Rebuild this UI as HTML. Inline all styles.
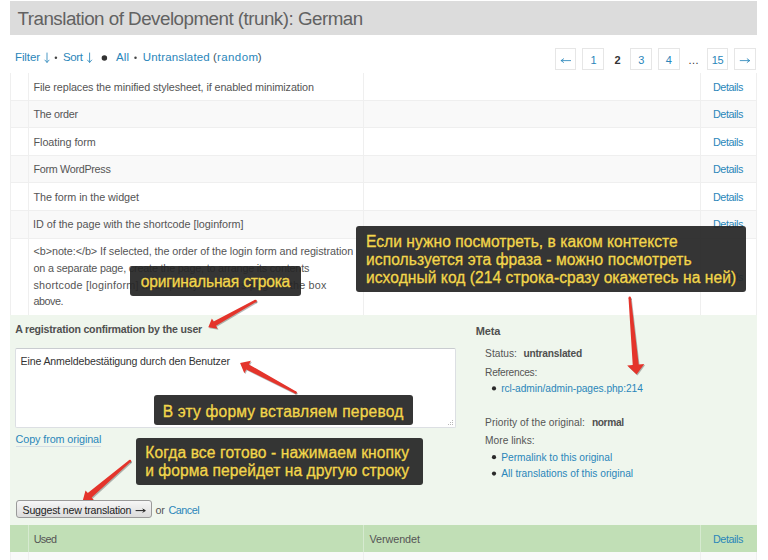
<!DOCTYPE html>
<html><head><meta charset="utf-8">
<style>
html,body{margin:0;padding:0;width:768px;height:560px;overflow:hidden;background:#fff;font-family:"Liberation Sans",sans-serif;}
.a{position:absolute}
.t{position:absolute;line-height:1;white-space:pre;font-family:"Liberation Sans",sans-serif}
.pg{position:absolute;top:48px;height:22px;width:22px;box-sizing:border-box;border:1px solid #e6e6e6;background:#fff}
.hl{position:absolute;height:1px;background:#efefef}
.vl{position:absolute;width:1px;background:#efefef}
.tip{position:absolute;background:rgba(38,38,38,0.93);border-radius:3px}
</style></head><body>
<!-- header -->
<div class=a style="left:10px;top:1px;width:747px;height:34px;background:#dcdcdc"></div>

<!-- pagination -->
<div class=pg style="left:555px;width:21px"></div>
<div class=pg style="left:582px"></div>
<div class=pg style="left:630px"></div>
<div class=pg style="left:658px"></div>
<div class=pg style="left:707px;width:21px"></div>
<div class=pg style="left:734px"></div>

<!-- table -->
<div class=a style="left:10px;top:100px;width:746.5px;height:27.5px;background:#f9f9f9"></div>
<div class=a style="left:10px;top:155px;width:746.5px;height:27.5px;background:#f9f9f9"></div>
<div class=a style="left:10px;top:210px;width:746.5px;height:28px;background:#f9f9f9"></div>
<div class=hl style="left:10px;top:99.5px;width:746.5px"></div>
<div class=hl style="left:10px;top:127px;width:746.5px"></div>
<div class=hl style="left:10px;top:154.5px;width:746.5px"></div>
<div class=hl style="left:10px;top:182px;width:746.5px"></div>
<div class=hl style="left:10px;top:209.5px;width:746.5px"></div>
<div class=hl style="left:10px;top:237.5px;width:746.5px"></div>
<div class=vl style="left:9.5px;top:72.5px;height:242.5px"></div>
<div class=vl style="left:28px;top:72.5px;height:242.5px"></div>
<div class=vl style="left:363px;top:72.5px;height:242.5px"></div>
<div class=vl style="left:700px;top:72.5px;height:242.5px"></div>
<div class=vl style="left:756px;top:72.5px;height:242.5px"></div>

<!-- editor -->
<div class=a style="left:10px;top:315px;width:746.5px;height:210px;background:#eff6ed"></div>
<div class=a style="left:15.2px;top:348px;width:441.3px;height:80.3px;box-sizing:border-box;background:#fff;border:1px solid #dcdfe3;border-top-color:#c9ccd0;border-radius:2px"></div>
<svg class=a style="left:446px;top:418px" width="10" height="10" viewBox="446 418 10 10" fill="#b8b8b8"><rect x="452" y="420" width="1" height="1"/><rect x="450" y="422" width="1" height="1"/><rect x="452" y="422" width="1" height="1"/><rect x="448" y="424" width="1" height="1"/><rect x="450" y="424" width="1" height="1"/><rect x="452" y="424" width="1" height="1"/></svg>
<div class=a style="left:15.6px;top:445.8px;width:85.4px;height:1px;background:#d4dde4"></div>
<svg class=a style="left:0;top:0" width="768" height="560" viewBox="0 0 768 560"><defs><filter id="sh" x="-20%" y="-20%" width="140%" height="140%"><feGaussianBlur stdDeviation="0.7"/></filter></defs><g transform="translate(0.9,1.1)" filter="url(#sh)" fill="rgba(0,0,0,0.28)"><polygon points="208.30,327.20 217.63,328.76 215.96,325.75 256.18,301.95 255.02,299.85 213.58,321.46 211.90,318.45"/><circle cx="255.6" cy="300.9" r="1.2"/></g><g transform="translate(0.9,1.1)" filter="url(#sh)" fill="rgba(0,0,0,0.28)"><polygon points="636.60,374.50 644.29,363.97 638.71,364.47 630.90,297.69 628.50,297.91 632.73,365.01 627.16,365.51"/><circle cx="629.7" cy="297.8" r="1.2"/></g><g transform="translate(0.9,1.1)" filter="url(#sh)" fill="rgba(0,0,0,0.28)"><polygon points="240.10,363.00 244.32,373.17 246.27,369.51 295.04,393.56 296.16,391.44 248.94,364.47 250.89,360.81"/><circle cx="295.6" cy="392.5" r="1.2"/></g><g transform="translate(0.9,1.1)" filter="url(#sh)" fill="rgba(0,0,0,0.28)"><polygon points="82.50,501.50 93.94,500.27 91.67,497.61 130.78,461.81 129.22,459.99 87.77,493.05 85.50,490.39"/><circle cx="130.0" cy="460.9" r="1.2"/></g><g fill="#e4342b"><polygon points="208.30,327.20 217.63,328.76 215.96,325.75 256.18,301.95 255.02,299.85 213.58,321.46 211.90,318.45"/><circle cx="255.6" cy="300.9" r="1.2"/></g><g fill="#e4342b"><polygon points="636.60,374.50 644.29,363.97 638.71,364.47 630.90,297.69 628.50,297.91 632.73,365.01 627.16,365.51"/><circle cx="629.7" cy="297.8" r="1.2"/></g><g fill="#e4342b"><polygon points="240.10,363.00 244.32,373.17 246.27,369.51 295.04,393.56 296.16,391.44 248.94,364.47 250.89,360.81"/><circle cx="295.6" cy="392.5" r="1.2"/></g><g fill="#e4342b"><polygon points="82.50,501.50 93.94,500.27 91.67,497.61 130.78,461.81 129.22,459.99 87.77,493.05 85.50,490.39"/><circle cx="130.0" cy="460.9" r="1.2"/></g></svg>
<div class=a style="left:15.7px;top:500.2px;width:136.2px;height:18.2px;box-sizing:border-box;border:1px solid #9a9a9a;border-radius:3px;background:linear-gradient(#f6f6f6,#dcdcdc)"></div>

<!-- used row -->
<div class=a style="left:10px;top:525px;width:746.5px;height:26.8px;background:#c1dfb6"></div>
<div class=a style="left:10px;top:551.8px;width:746.5px;height:9px;background:#f9f9f9"></div>
<div class=vl style="left:28px;top:525px;height:27px;background:#d6ead0"></div>
<div class=vl style="left:363px;top:525px;height:27px;background:#d6ead0"></div>
<div class=vl style="left:700px;top:525px;height:27px;background:#d6ead0"></div>
<div class=vl style="left:9.5px;top:552px;height:10px"></div>
<div class=vl style="left:28px;top:552px;height:10px"></div>
<div class=vl style="left:363px;top:552px;height:10px"></div>
<div class=vl style="left:700px;top:552px;height:10px"></div>
<div class=vl style="left:756px;top:552px;height:10px"></div>

<div class=t style="left:17.50px;top:10.00px;font-size:18.8px;color:#626262;letter-spacing:-0.514px;">Translation of Development (trunk): German</div>
<div class=t style="left:15.00px;top:52.00px;font-size:11.5px;color:#2a86ba;letter-spacing:-0.105px;">Filter</div>
<div class=t style="left:63.10px;top:52.00px;font-size:11.5px;color:#2a86ba;letter-spacing:-0.399px;">Sort</div>
<div class=t style="left:116.00px;top:52.00px;font-size:11.5px;color:#2a86ba;letter-spacing:0.187px;">All</div>
<div class=t style="left:142.80px;top:52.00px;font-size:11.5px;color:#2a86ba;letter-spacing:0.154px;">Untranslated</div>
<div class=t style="left:213.00px;top:52.00px;font-size:11.5px;color:#4a5560;letter-spacing:0.000px;">(</div>
<div class=t style="left:217.00px;top:52.00px;font-size:11.5px;color:#2a86ba;letter-spacing:0.417px;">random</div>
<div class=t style="left:257.80px;top:52.00px;font-size:11.5px;color:#4a5560;letter-spacing:0.000px;">)</div>
<div class=t style="left:33.50px;top:82.00px;font-size:10.8px;color:#555555;letter-spacing:-0.106px;">File replaces the minified stylesheet, if enabled minimization</div>
<div class=t style="left:713.00px;top:82.00px;font-size:10.8px;color:#2a86ba;letter-spacing:-0.434px;">Details</div>
<div class=t style="left:33.50px;top:109.00px;font-size:10.8px;color:#555555;letter-spacing:-0.264px;">The order</div>
<div class=t style="left:713.00px;top:109.00px;font-size:10.8px;color:#2a86ba;letter-spacing:-0.434px;">Details</div>
<div class=t style="left:33.50px;top:137.00px;font-size:10.8px;color:#555555;letter-spacing:-0.059px;">Floating form</div>
<div class=t style="left:713.00px;top:137.00px;font-size:10.8px;color:#2a86ba;letter-spacing:-0.434px;">Details</div>
<div class=t style="left:33.50px;top:164.00px;font-size:10.8px;color:#555555;letter-spacing:-0.315px;">Form WordPress</div>
<div class=t style="left:713.00px;top:164.00px;font-size:10.8px;color:#2a86ba;letter-spacing:-0.434px;">Details</div>
<div class=t style="left:33.50px;top:192.00px;font-size:10.8px;color:#555555;letter-spacing:-0.063px;">The form in the widget</div>
<div class=t style="left:713.00px;top:192.00px;font-size:10.8px;color:#2a86ba;letter-spacing:-0.434px;">Details</div>
<div class=t style="left:33.00px;top:219.00px;font-size:10.8px;color:#555555;letter-spacing:-0.029px;">ID of the page with the shortcode [loginform]</div>
<div class=t style="left:713.00px;top:219.00px;font-size:10.8px;color:#2a86ba;letter-spacing:-0.434px;">Details</div>
<div class=t style="left:33.50px;top:246.00px;font-size:10.8px;color:#555555;letter-spacing:-0.055px;">&lt;b&gt;note:&lt;/b&gt; If selected, the order of the login form and registration</div>
<div class=t style="left:33.50px;top:263.00px;font-size:10.8px;color:#555555;letter-spacing:-0.187px;">on a separate page, create the page, to arrange its contents</div>
<div class=t style="left:33.50px;top:280.00px;font-size:10.8px;color:#555555;letter-spacing:0.204px;">shortcode [loginform] and specify ID of this page in the box</div>
<div class=t style="left:33.50px;top:296.00px;font-size:10.8px;color:#555555;letter-spacing:-0.503px;">above.</div>
<div class=t style="left:713.00px;top:272.00px;font-size:10.8px;color:#2a86ba;letter-spacing:-0.434px;">Details</div>
<div class=t style="left:15.20px;top:324.00px;font-size:10.6px;color:#505050;font-weight:700;letter-spacing:-0.211px;">A registration confirmation by the user</div>
<div class=t style="left:20.60px;top:356.00px;font-size:10.6px;color:#333;letter-spacing:-0.149px;">Eine Anmeldebestätigung durch den Benutzer</div>
<div class=t style="left:15.60px;top:434.00px;font-size:10.8px;color:#2a86ba;letter-spacing:-0.106px;">Copy from original</div>
<div class=t style="left:22.50px;top:505.00px;font-size:10.6px;color:#222;letter-spacing:-0.190px;">Suggest new translation</div>
<div class=t style="left:155.60px;top:505.00px;font-size:10.8px;color:#555555;letter-spacing:-0.305px;">or</div>
<div class=t style="left:168.60px;top:505.00px;font-size:10.8px;color:#2a86ba;letter-spacing:-0.522px;">Cancel</div>
<div class=t style="left:475.70px;top:326.00px;font-size:11px;color:#505050;font-weight:700;letter-spacing:-0.148px;">Meta</div>
<div class=t style="left:485.10px;top:349.00px;font-size:10.2px;color:#555555;letter-spacing:0.000px;">Status:</div>
<div class=t style="left:523.40px;top:349.00px;font-size:10.2px;color:#505050;font-weight:700;letter-spacing:-0.210px;">untranslated</div>
<div class=t style="left:485.10px;top:368.00px;font-size:10.2px;color:#555555;letter-spacing:-0.280px;">References:</div>
<div class=t style="left:501.20px;top:384.00px;font-size:10.2px;color:#2a86ba;letter-spacing:-0.057px;">rcl-admin/admin-pages.php:214</div>
<div class=t style="left:485.10px;top:418.00px;font-size:10.2px;color:#555555;letter-spacing:0.050px;">Priority of the original:</div>
<div class=t style="left:591.90px;top:418.00px;font-size:10.2px;color:#505050;font-weight:700;letter-spacing:-0.367px;">normal</div>
<div class=t style="left:485.10px;top:436.00px;font-size:10.2px;color:#555555;letter-spacing:0.028px;">More links:</div>
<div class=t style="left:501.25px;top:453.00px;font-size:10.2px;color:#2a86ba;letter-spacing:-0.003px;">Permalink to this original</div>
<div class=t style="left:501.25px;top:469.00px;font-size:10.2px;color:#2a86ba;letter-spacing:-0.004px;">All translations of this original</div>
<div class=t style="left:33.70px;top:534.00px;font-size:10.8px;color:#555555;letter-spacing:-0.633px;">Used</div>
<div class=t style="left:369.50px;top:534.00px;font-size:10.8px;color:#555555;letter-spacing:-0.065px;">Verwendet</div>
<div class=t style="left:713.00px;top:534.00px;font-size:10.8px;color:#2a86ba;letter-spacing:-0.434px;">Details</div>
<div class=t style="left:590.50px;top:55.00px;font-size:11px;color:#2a86ba;letter-spacing:0.000px;">1</div>
<div class=t style="left:638.30px;top:55.00px;font-size:11px;color:#2a86ba;letter-spacing:0.000px;">3</div>
<div class=t style="left:665.80px;top:55.00px;font-size:11px;color:#2a86ba;letter-spacing:0.000px;">4</div>
<div class=t style="left:711.80px;top:55.00px;font-size:11px;color:#2a86ba;letter-spacing:-0.418px;">15</div>
<div class=t style="left:614.50px;top:55.00px;font-size:11px;color:#333;font-weight:700;letter-spacing:0.000px;">2</div>
<div class=t style="left:688.00px;top:55.00px;font-size:11px;color:#333;letter-spacing:0.000px;">…</div>
<svg class=a style="left:480px;top:380px" width="30" height="100" viewBox="480 380 30 100" fill="#2a2a2a"><circle cx="494" cy="388.4" r="2.1"/><circle cx="494" cy="457.2" r="2.1"/><circle cx="494" cy="473.6" r="2.1"/></svg>
<!-- filter arrows / dots -->
<svg class=a style="left:0;top:0" width="768" height="80" viewBox="0 0 768 80">
 <g stroke="#2a86ba" stroke-width="0.85" fill="none" stroke-linecap="round">
  <path d="M47 53 V62.3 M44.9 60.1 L47 62.4 L49.1 60.1"/>
  <path d="M89.6 53 V62.3 M87.5 60.1 L89.6 62.4 L91.7 60.1"/>
  <path d="M561.2 60.6 H570.6 M563.6 58.8 L561.1 60.6 L563.6 62.4"/>
  <path d="M740.2 60.6 H749.6 M747.2 58.8 L749.7 60.6 L747.2 62.4"/>
 </g>
 <circle cx="55.9" cy="57.7" r="1.25" fill="#444"/>
 <circle cx="104.4" cy="57.9" r="2.75" fill="#333"/>
 <circle cx="135.5" cy="57.7" r="1.25" fill="#444"/>
</svg>

<!-- tooltips -->
<div class=tip style="left:356px;top:226px;width:390.4px;height:66px"></div>
<div class=tip style="left:130.4px;top:266px;width:170.6px;height:29.6px"></div>
<div class=tip style="left:153.9px;top:395.3px;width:258.8px;height:29.4px"></div>
<div class=tip style="left:136.25px;top:437.7px;width:287px;height:46.9px"></div>
<svg class=a style="left:0;top:490px" width="200" height="40" viewBox="0 490 200 40"><path d="M135.6 510.6 H145.2 M142.6 508.9 L145.3 510.6 L142.6 512.3" stroke="#222" stroke-width="1" fill="none"/></svg>
<div class=t style="left:366.00px;top:234.00px;font-size:15.6px;color:#f2d64e;letter-spacing:0.038px;-webkit-text-stroke:0.35px #f2d64e;text-shadow:0 0 1px rgba(0,0,0,0.5)">Если нужно посмотреть, в каком контексте</div>
<div class=t style="left:366.00px;top:252.00px;font-size:15.6px;color:#f2d64e;letter-spacing:0.075px;-webkit-text-stroke:0.35px #f2d64e;text-shadow:0 0 1px rgba(0,0,0,0.5)">используется эта фраза - можно посмотреть</div>
<div class=t style="left:366.00px;top:270.00px;font-size:15.6px;color:#f2d64e;letter-spacing:0.049px;-webkit-text-stroke:0.35px #f2d64e;text-shadow:0 0 1px rgba(0,0,0,0.5)">исходный код (214 строка-сразу окажетесь на ней)</div>
<div class=t style="left:140.80px;top:274.00px;font-size:15.6px;color:#f2d64e;letter-spacing:-0.204px;-webkit-text-stroke:0.35px #f2d64e;text-shadow:0 0 1px rgba(0,0,0,0.5)">оригинальная строка</div>
<div class=t style="left:162.70px;top:404.00px;font-size:15.6px;color:#f2d64e;letter-spacing:0.174px;-webkit-text-stroke:0.35px #f2d64e;text-shadow:0 0 1px rgba(0,0,0,0.5)">В эту форму вставляем перевод</div>
<div class=t style="left:145.25px;top:445.00px;font-size:15.6px;color:#f2d64e;letter-spacing:0.095px;-webkit-text-stroke:0.35px #f2d64e;text-shadow:0 0 1px rgba(0,0,0,0.5)">Когда все готово - нажимаем кнопку</div>
<div class=t style="left:145.25px;top:463.00px;font-size:15.6px;color:#f2d64e;letter-spacing:0.041px;-webkit-text-stroke:0.35px #f2d64e;text-shadow:0 0 1px rgba(0,0,0,0.5)">и форма перейдет на другую строку</div>
</body></html>
